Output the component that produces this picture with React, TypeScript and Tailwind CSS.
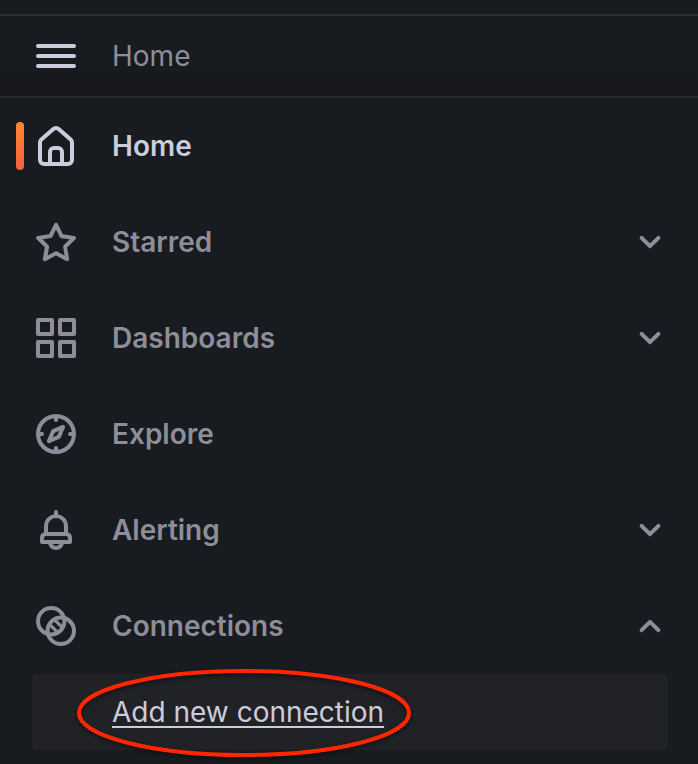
import clsx from "clsx";
import type { ReactNode } from "react";

function Icon({ children }: { children: ReactNode }) {
  return (
    <svg viewBox="0 0 24 24" fill="currentColor" aria-hidden="true" className="size-12 shrink-0">
      {children}
    </svg>
  );
}

const ICONS = {
  menu: (
    <path
      d="M3 7h18M3 12h18M3 17h18"
      fill="none"
      stroke="currentColor"
      strokeWidth="2"
      strokeLinecap="round"
    />
  ),
  home: (
    <path d="M20,8h0L14,2.74a3,3,0,0,0-4,0L4,8a3,3,0,0,0-1,2.26V19a3,3,0,0,0,3,3H18a3,3,0,0,0,3-3V10.25A3,3,0,0,0,20,8ZM14,20H10V15a1,1,0,0,1,1-1h2a1,1,0,0,1,1,1Zm5-1a1,1,0,0,1-1,1H16V15a3,3,0,0,0-3-3H11a3,3,0,0,0-3,3v5H6a1,1,0,0,1-1-1V10.25a1,1,0,0,1,.34-.75l6-5.25a1,1,0,0,1,1.32,0l6,5.25a1,1,0,0,1,.34.75Z" />
  ),
  star: (
    <path d="M22,9.67A1,1,0,0,0,21.14,9l-5.69-.83L12.9,3a1,1,0,0,0-1.8,0L8.55,8.16,2.86,9a1,1,0,0,0-.81.68,1,1,0,0,0,.25,1l4.13,4-1,5.68A1,1,0,0,0,6.9,21.44L12,18.77l5.1,2.67a.93.93,0,0,0,.46.12,1,1,0,0,0,.59-.19,1,1,0,0,0,.4-1l-1-5.68,4.13-4A1,1,0,0,0,22,9.67Zm-6.15,4a1,1,0,0,0-.29.88l.72,4.2-3.76-2a1.06,1.06,0,0,0-.94,0l-3.76,2,.72-4.2a1,1,0,0,0-.29-.88l-3-3,4.21-.61a1,1,0,0,0,.76-.55L12,5.7l1.88,3.82a1,1,0,0,0,.76.55l4.21.61Z" />
  ),
  apps: (
    <path
      d="M3 3h7v7H3zM14 3h7v7h-7zM3 14h7v7H3zM14 14h7v7h-7z"
      fill="none"
      stroke="currentColor"
      strokeWidth="2"
      strokeLinejoin="round"
    />
  ),
  compass: (
    <path d="M12,2A10,10,0,1,0,22,12,10,10,0,0,0,12,2Zm1,17.93V19a1,1,0,0,0-2,0v.93A8,8,0,0,1,4.07,13H5a1,1,0,0,0,0-2H4.07A8,8,0,0,1,11,4.07V5a1,1,0,0,0,2,0V4.07A8,8,0,0,1,19.93,11H19a1,1,0,0,0,0,2h.93A8,8,0,0,1,13,19.93ZM15.14,7.55l-5,2.12a1,1,0,0,0-.52.52l-2.12,5a1,1,0,0,0,.21,1.1,1,1,0,0,0,.7.3.93.93,0,0,0,.4-.09l5-2.12a1,1,0,0,0,.52-.52l2.12-5a1,1,0,0,0-1.31-1.31Zm-2.49,5.1-2.28,1,1-2.28,2.28-1Z" />
  ),
  bell: (
    <path d="M18,13.18V10a6,6,0,0,0-5-5.91V3a1,1,0,0,0-2,0V4.09A6,6,0,0,0,6,10v3.18A3,3,0,0,0,4,16v2a1,1,0,0,0,1,1H8.14a4,4,0,0,0,7.72,0H19a1,1,0,0,0,1-1V16A3,3,0,0,0,18,13.18ZM8,10a4,4,0,0,1,8,0v3H8Zm4,10a2,2,0,0,1-1.72-1h3.44A2,2,0,0,1,12,20Zm6-3H6V16a1,1,0,0,1,1-1H17a1,1,0,0,1,1,1Z" />
  ),
  connections: (
    <g fill="none" stroke="currentColor" strokeWidth="2">
      <circle cx="9.6" cy="9.6" r="6.6" />
      <circle cx="14.4" cy="14.4" r="6.6" />
      <path d="M11.2 8.8l4 4M8.8 11.2l4 4" strokeWidth="1.7" />
    </g>
  ),
};

function Chevron({ open }: { open?: boolean }) {
  return (
    <Icon>
      <path
        d={open ? "M7.8 14.1L12 9.9l4.2 4.2" : "M7.8 9.9l4.2 4.2 4.2-4.2"}
        fill="none"
        stroke="currentColor"
        strokeWidth="2"
        strokeLinecap="round"
        strokeLinejoin="round"
      />
    </Icon>
  );
}

type NavItem = {
  label: string;
  icon: keyof typeof ICONS;
  active?: boolean;
  expandable?: boolean;
  children?: string[];
};

const NAV: NavItem[] = [
  { label: "Home", icon: "home", active: true },
  { label: "Starred", icon: "star", expandable: true },
  { label: "Dashboards", icon: "apps", expandable: true },
  { label: "Explore", icon: "compass" },
  { label: "Alerting", icon: "bell", expandable: true },
  {
    label: "Connections",
    icon: "connections",
    expandable: true,
    children: ["Add new connection"],
  },
];

function NavRow({ item }: { item: NavItem }) {
  return (
    <div
      className={clsx(
        "relative flex h-24 items-center pr-6 pl-8",
        item.active ? "text-[#ccccdc]" : "text-[#8e8e9a]",
      )}
    >
      {item.active && (
        <span className="absolute top-6 left-4 h-12 w-2 rounded-sm bg-linear-to-b from-[#ff8833] to-[#f55f3e]" />
      )}
      <a href="#" className="flex flex-1 items-center gap-8 font-semibold">
        <Icon>{ICONS[item.icon]}</Icon>
        {item.label}
      </a>
      {item.expandable && (
        <button
          type="button"
          aria-expanded={!!item.children}
          aria-label={`${item.children ? "Collapse" : "Expand"} ${item.label}`}
          className="cursor-pointer"
        >
          <Chevron open={!!item.children} />
        </button>
      )}
    </div>
  );
}

/* Hand-drawn style marker ring around the highlighted link. */
function Ring() {
  return (
    <svg
      viewBox="0 0 344 98"
      aria-hidden="true"
      className="pointer-events-none absolute -top-3 left-10 h-[98px] w-[344px] drop-shadow-[0_2px_2px_rgba(0,0,0,0.5)]"
    >
      <ellipse cx="172" cy="51" rx="165" ry="42" fill="none" stroke="#ff2600" strokeWidth="4" />
    </svg>
  );
}

export default function App() {
  return (
    <div className="min-h-screen bg-[#181b1f] pt-[14px] font-[Inter,sans-serif] text-[28px] leading-9">
      <header className="flex h-[84px] items-center gap-8 border-y-2 border-t-[#2e3036] border-b-[#27292e] bg-linear-to-b from-[#181b1f] from-50% to-[#16181b] pl-8">
        <button type="button" aria-label="Close menu" className="cursor-pointer text-[#ccccdc]">
          <Icon>{ICONS.menu}</Icon>
        </button>
        <span className="text-[#8e8e9a]">Home</span>
      </header>
      <nav>
        <ul>
          {NAV.map((item) => (
            <li key={item.label}>
              <NavRow item={item} />
              {item.children?.map((child) => (
                <div
                  key={child}
                  className="relative mr-[30px] ml-8 flex h-[76px] items-center rounded-sm bg-[#212226] pl-20 text-[#ccccdc]"
                >
                  <a href="#" className="underline decoration-2 underline-offset-4">
                    {child}
                  </a>
                  <Ring />
                </div>
              ))}
            </li>
          ))}
        </ul>
      </nav>
    </div>
  );
}
